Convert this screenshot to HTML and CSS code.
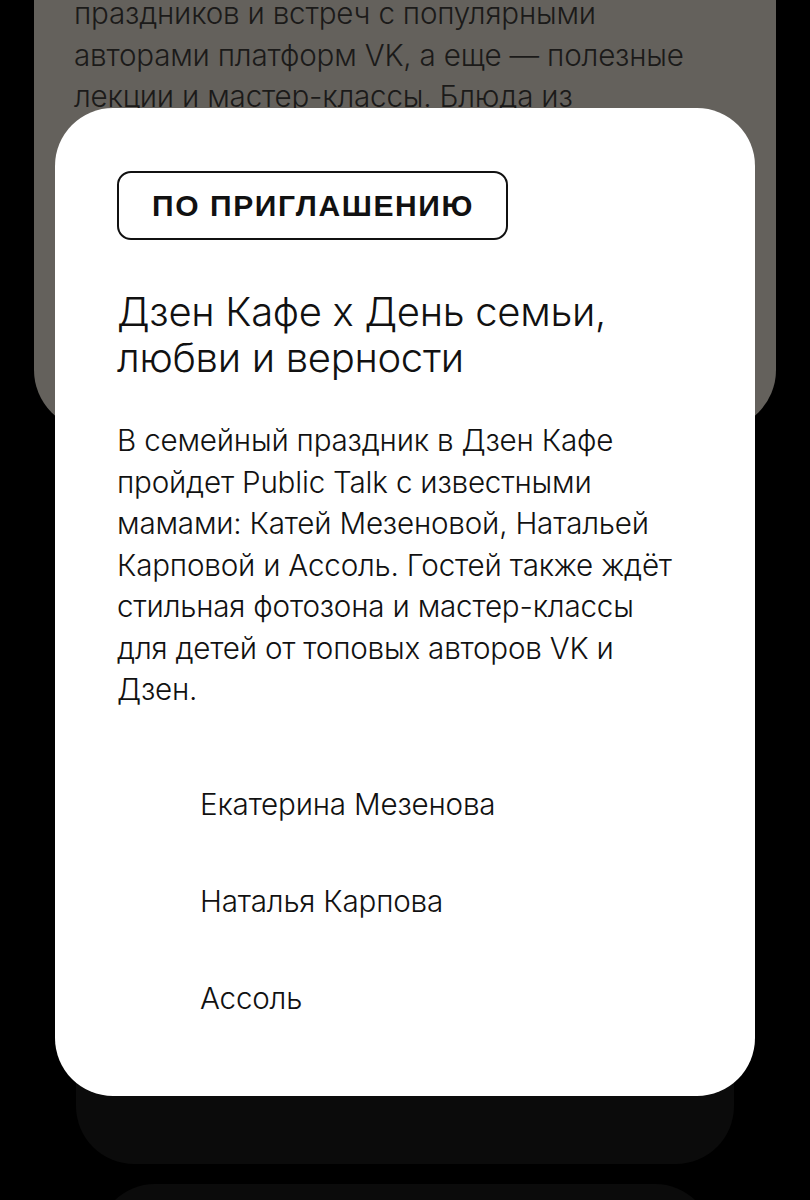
FILE: index.html
```html
<!DOCTYPE html>
<html lang="ru">
<head>
<meta charset="utf-8">
<title>Дзен Кафе</title>
<link rel="stylesheet" href="styles.css">
</head>
<body>
<div class="feed">
  <section class="card card-prev">
    <p class="prev-text">праздников и встреч с популярными авторами платформ VK, а еще — полезные лекции и мастер-классы. Блюда из ассортимента кафе</p>
  </section>
  <section class="card card-main">
    <div class="badge">ПО ПРИГЛАШЕНИЮ</div>
    <h1 class="title">Дзен Кафе х День семьи, любви и верности</h1>
    <p class="desc">В семейный праздник в Дзен Кафе пройдет Public Talk с известными мамами: Катей Мезеновой, Натальей Карповой и Ассоль. Гостей также ждёт стильная фотозона и мастер-классы для детей от топовых авторов VK и Дзен.</p>
    <ul class="people">
      <li class="person"><span class="avatar"></span><span class="name">Екатерина Мезенова</span></li>
      <li class="person"><span class="avatar"></span><span class="name">Наталья Карпова</span></li>
      <li class="person"><span class="avatar"></span><span class="name">Ассоль</span></li>
    </ul>
  </section>
  <section class="card card-back"></section>
  <section class="card card-next"></section>
</div>
</body>
</html>
```

FILE: styles.css
```css
* { box-sizing: border-box; }
html, body {
  margin: 0;
  padding: 0;
  background: #000;
  height: 1200px;
  overflow: hidden;
}
body {
  font-family: Inter, "Noto Sans", Roboto, sans-serif;
  font-weight: 300;
  color: #111;
}
.feed {
  display: flex;
  flex-direction: column;
}
.card {
  position: relative;
  border-radius: 58px;
}
.card-prev {
  z-index: 1;
  margin: 0 34px;
  height: 430px;
  background: #64615c;
  border-radius: 0 0 60px 60px;
  padding: 0 40px;
  overflow: hidden;
}
.prev-text {
  margin: -7px 0 0 0;
  font-size: 29.6px;
  line-height: 41.5px;
  color: #1b1a19;
  letter-spacing: -0.2px;
}
.card-main {
  z-index: 3;
  margin: -322px 55px 0 55px;
  background: #fff;
  padding: 63px 62px 49px 62px;
}
.badge {
  display: inline-block;
  border: 2px solid #111;
  border-radius: 14px;
  padding: 0 32px 0 33px;
  height: 69px;
  line-height: 65px;
  font-family: "Liberation Sans", Arial, sans-serif;
  font-weight: 700;
  font-size: 30px;
  letter-spacing: 1.6px;
  color: #111;
}
.title {
  margin: 49px 0 0 0;
  font-weight: 300;
  font-size: 40px;
  line-height: 46px;
  letter-spacing: -0.3px;
  color: #111;
}
.desc {
  margin: 39px 0 0 0;
  max-width: 560px;
  font-size: 29.6px;
  line-height: 41.5px;
  letter-spacing: -0.2px;
  color: #111;
}
.people {
  list-style: none;
  margin: 45px 0 0 0;
  padding: 0;
}
.person {
  display: flex;
  align-items: center;
  height: 97px;
  gap: 19px;
}
.avatar {
  width: 64px;
  height: 64px;
  flex: none;
}
.name {
  font-size: 29.6px;
  line-height: 36px;
  letter-spacing: -0.2px;
}
.card-back {
  z-index: 2;
  margin: -100px 76px 0 76px;
  height: 168px;
  background: #0b0b0b;
  border-radius: 0 0 58px 58px;
}
.card-next {
  z-index: 1;
  margin: 20px 97px 0 97px;
  height: 200px;
  background: #0b0b0b;
}
```
